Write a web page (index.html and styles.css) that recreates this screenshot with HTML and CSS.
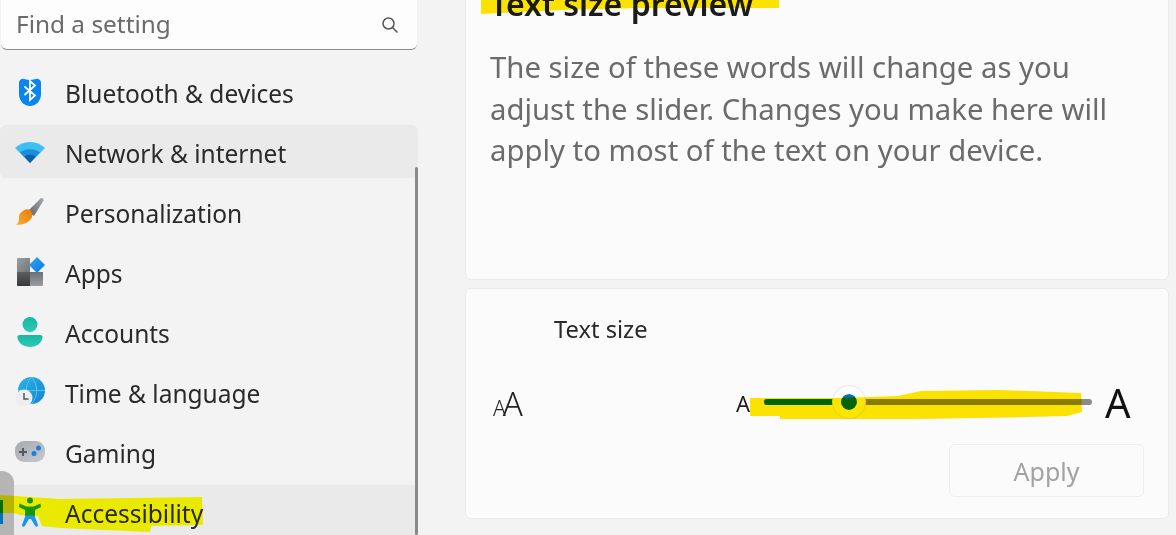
FILE: index.html
```html
<!DOCTYPE html>
<html lang="en">
<head>
	<meta charset="UTF-8">
	<title>Settings</title>
	<link rel="stylesheet" href="styles.css">
</head>
<body>
	<svg class="defs" width="0" height="0">
		<defs>
			<linearGradient id="brush" x1="1" y1="0" x2="0" y2="1">
				<stop offset="0" stop-color="#a4a8ac"/>
				<stop offset="1" stop-color="#5f6469"/>
			</linearGradient>
			<linearGradient id="bristle" x1="1" y1="0" x2="0" y2="1">
				<stop offset="0" stop-color="#e8780f"/>
				<stop offset="1" stop-color="#fbb02e"/>
			</linearGradient>
			<linearGradient id="tile-top" x1="0" y1="0" x2="1" y2="1">
				<stop offset="0" stop-color="#9a9da0"/>
				<stop offset="1" stop-color="#74777a"/>
			</linearGradient>
			<linearGradient id="tile-dark" x1="0" y1="0" x2="0" y2="1">
				<stop offset="0" stop-color="#5c5e60"/>
				<stop offset="1" stop-color="#38393b"/>
			</linearGradient>
			<linearGradient id="tile-right" x1="0" y1="0" x2="0" y2="1">
				<stop offset="0" stop-color="#6e7073"/>
				<stop offset="1" stop-color="#9a9c9f"/>
			</linearGradient>
			<linearGradient id="diamond" x1="0" y1="0" x2="1" y2="1">
				<stop offset="0" stop-color="#2ba6f5"/>
				<stop offset="1" stop-color="#0a78e2"/>
			</linearGradient>
			<linearGradient id="person" x1="0" y1="0" x2="0" y2="1">
				<stop offset="0" stop-color="#16b9a4"/>
				<stop offset="1" stop-color="#2ec9b6"/>
			</linearGradient>
			<linearGradient id="globe" x1="0" y1="0" x2="1" y2="1">
				<stop offset="0" stop-color="#2cb4e4"/>
				<stop offset="1" stop-color="#1484d2"/>
			</linearGradient>
			<linearGradient id="pad" x1="0" y1="0" x2="1" y2="1">
				<stop offset="0" stop-color="#a6aaaf"/>
				<stop offset="1" stop-color="#c6c9cd"/>
			</linearGradient>
		</defs>
	</svg>

	<aside class="sidebar">
		<div class="search">
			<span>Find a setting</span>
			<svg class="search-icon" viewBox="0 0 18 18"><circle cx="7.5" cy="7.5" r="5.5"/><path d="M11.5 11.5 16.5 16.500"/></svg>
		</div>
		<ul class="nav">
			<li>
				<svg class="nav-icon" viewBox="0 0 30 30">
					<path fill="#0a84f0" d="M7 2C9 1 11 3 15 3S21 1 23 2C25 2.500 26 4 26 6V17C26 24 21 29 15 29S4 24 4 17V6C4 4 5 2.500 7 2z"/>
					<path fill="none" stroke="#fff" stroke-width="1.800" d="M9.500 9.500 20 18.500 15 23V4l5 4.500L9.500 18"/>
				</svg>
				<span>Bluetooth &amp; devices</span>
			</li>
			<li class="hover">
				<svg class="nav-icon" viewBox="0 0 30 30">
					<path fill="#3cc0f2" d="M0 11C8 3 22 3 30 11L15 26z"/>
					<path fill="#1c8ed8" d="M5 15.500C10 11 20 11 25 15.500L15 26z"/>
					<path fill="#0f5fa8" d="M9.500 19.500C12.500 17 17.500 17 20.500 19.500L15 26z"/>
				</svg>
				<span>Network &amp; internet</span>
			</li>
			<li>
				<svg class="nav-icon" viewBox="0 0 30 30">
					<path fill="url(#brush)" d="M26 1c1.500-.5 3 1 2.500 2.500L19 19l-6-5z"/>
					<path fill="url(#bristle)" d="M8 14c2-2 5-2 7-1 2 2 3 5 2 7-2 5-8 8-16 8 3-2 3-6 3-8 0-3 2-5 4-6z"/>
				</svg>
				<span>Personalization</span>
			</li>
			<li>
				<svg class="nav-icon" viewBox="0 0 30 30">
					<path fill="url(#tile-top)" d="M3 1h12v14H2V2c0-.5.500-1 1-1z"/>
					<path fill="url(#tile-dark)" d="M2 15h13v14H3c-.5 0-1-.5-1-1z"/>
					<path fill="url(#tile-right)" d="M15 15h13v13c0 .5-.5 1-1 1H15z"/>
					<path fill="url(#diamond)" d="M22 0 30 8 22 16 14 8z"/>
				</svg>
				<span>Apps</span>
			</li>
			<li>
				<svg class="nav-icon" viewBox="0 0 30 30">
					<circle cx="15" cy="7.500" r="7.500" fill="url(#person)"/>
					<path fill="url(#person)" d="M5 18h20c2 0 3 1 2.500 3-1 5-6 9-12.500 9S3.500 26 2.500 21C2 19 3 18 5 18z"/>
				</svg>
				<span>Accounts</span>
			</li>
			<li>
				<svg class="nav-icon" viewBox="0 0 30 30">
					<circle cx="16.500" cy="13.500" r="13.500" fill="url(#globe)"/>
					<path fill="none" stroke="#5cc2ec" d="M3 13.500h27M16.500 0c-7 8-7 19 0 27M16.500 0c7 8 7 19 0 27"/>
					<circle cx="9" cy="21" r="8.500" fill="#eceef0"/>
					<path fill="none" stroke="#55585c" stroke-width="1.500" d="M9 16v6h4.500"/>
				</svg>
				<span>Time &amp; language</span>
			</li>
			<li>
				<svg class="nav-icon" viewBox="0 0 30 30">
					<rect y="4" width="30" height="21" rx="9" fill="url(#pad)"/>
					<path fill="none" stroke="#55585c" stroke-width="2" d="M4 15h8M8 11v8"/>
					<circle cx="23.500" cy="11" r="2.500" fill="#1a80e0"/>
					<circle cx="19" cy="16.500" r="2.500" fill="#1a80e0"/>
				</svg>
				<span>Gaming</span>
			</li>
			<li class="hover">
				<svg class="nav-icon" viewBox="0 0 30 30">
					<circle cx="15" cy="3.500" r="3" fill="#1a96e8"/>
					<path fill="#1a96e8" d="M4.500 6.500 11.500 9.500h7l7-3L26 10l-6 3v7l3 8c.4 1.500-1.800 2.300-2.800 1L16 22h-2l-4.200 7c-1 1.300-3.200.5-2.800-1l3-8v-7l-6-3z"/>
				</svg>
				<span>Accessibility</span>
			</li>
		</ul>
		<div class="peek"></div>
		<div class="selected-bar"></div>
		<div class="scrollbar"></div>
	</aside>

	<main class="content">
		<section class="card preview">
			<h2>Text size preview</h2>
			<p>The size of these words will change as you adjust the slider. Changes you make here will apply to most of the text on your device.</p>
		</section>
		<section class="card size">
			<div class="size-label">Text size</div>
			<div class="size-row">
				<span class="size-icon"><span class="small">A</span><span class="big">A</span></span>
				<span class="a-small">A</span>
				<div class="slider">
					<div class="track"></div>
					<div class="fill"></div>
					<div class="thumb"></div>
				</div>
				<span class="a-big">A</span>
			</div>
			<div class="size-actions">
				<button class="apply">Apply</button>
			</div>
		</section>
	</main>

	<!-- marker strokes drawn over the screenshot -->
	<svg class="marker" viewBox="0 0 1176 535">
		<path fill="#ffe600" d="M481-5H779V8L640 8 560 10 481 14z"/>
		<path fill="#ffe600" d="M750 398 834 398 870 397 898 396 921 391 1000 390 1081 393 1082 412 1067 416 1026 417 917 419 780 419 780 416 750 416z"/>
		<path fill="#ffff00" d="M0 495 60 499 202 497 203 525 151 526 150 532 60 528 42 526 38 516 20 515 14 513 0 513z"/>
	</svg>
</body>
</html>
```

FILE: styles.css
```css
html, body {
	height: 100%;
}
body {
	margin: 0;
	display: flex;
	overflow: hidden;
	background: #f3f3f3;
	color: #1f1f1f;
	font-family: "Noto Sans", sans-serif;
}
.defs {
	position: absolute;
}

/* sidebar */
.sidebar {
	position: relative;
	width: 418px;
	flex: none;
}
.search {
	display: flex;
	align-items: center;
	justify-content: space-between;
	height: 50px;
	margin: 0 1px 15px;
	padding: 0 18px 0 15px;
	box-sizing: border-box;
	background: #fdfdfd;
	border-bottom: 1px solid #8a8a8a;
	border-radius: 0 0 6px 6px;
	font-size: 24.4px;
	color: #6a6a6a;
}
.search span {
	margin-top: -2px;
}
.search-icon {
	width: 18px;
	height: 18px;
	fill: none;
	stroke: #555;
	stroke-width: 1.5;
}
.nav {
	list-style: none;
	margin: 0;
	padding: 0;
	display: flex;
	flex-direction: column;
	gap: 7px;
}
.nav li {
	display: flex;
	align-items: center;
	gap: 20px;
	height: 53px;
	padding-left: 15px;
	border-radius: 6px;
	font-size: 24.5px;
	color: #2a2a2a;
}
.nav li span {
	padding-top: 3px;
}
.nav li.hover {
	background: #eaeaea;
}
.nav-icon {
	width: 30px;
	height: 30px;
	flex: none;
}
.peek {
	position: absolute;
	left: 0;
	top: 471px;
	width: 14px;
	height: 64px;
	background: #b5b5b5;
	border-radius: 0 12px 0 0;
}
.selected-bar {
	position: absolute;
	left: 0;
	top: 500px;
	width: 3px;
	height: 24px;
	background: #0070c0;
}
.scrollbar {
	position: absolute;
	right: 0;
	top: 167px;
	bottom: 0;
	width: 3px;
	background: #8a8a8a;
	border-radius: 2px;
}

/* main column */
.content {
	flex: 1;
	display: flex;
	flex-direction: column;
	gap: 8px;
	margin: -20px 7px 0 47px;
}
.card {
	background: #fbfbfb;
	border: 1px solid #ebebeb;
	border-radius: 6px;
	box-sizing: border-box;
}
.preview {
	height: 300px;
	padding: 0 50px 0 24px;
}
.preview h2 {
	margin: 0;
	font-size: 32px;
	font-weight: 600;
	line-height: 46px;
	color: #1b1b1b;
}
.preview p {
	margin: 20px 0 0;
	font-size: 29.3px;
	line-height: 41.5px;
	color: #6b6b6b;
}
.size {
	height: 231px;
	padding: 22px 24px 20px 27px;
	display: flex;
	flex-direction: column;
}
.size-label {
	padding-left: 61px;
	font-size: 23.7px;
	line-height: 36px;
	color: #2a2a2a;
}
.size-row {
	display: flex;
	align-items: center;
	height: 44px;
	margin-top: 34px;
}
.size-icon {
	width: 243px;
	display: flex;
	align-items: baseline;
	font-weight: 300;
	color: #222;
}
.size-icon .small {
	font-size: 21px;
}
.size-icon .big {
	font-size: 33px;
	margin-left: -3px;
}
.a-small {
	width: 28px;
	font-size: 22px;
}
.slider {
	position: relative;
	width: 328px;
	height: 32px;
}
.track, .fill {
	position: absolute;
	top: 12px;
	left: 0;
	height: 6px;
	border-radius: 3px;
}
.track {
	right: 0;
	background: #8a8a8a;
}
.fill {
	width: 85px;
	background: #0070c0;
}
.thumb {
	position: absolute;
	left: 69px;
	top: -1px;
	width: 16px;
	height: 16px;
	padding: 8px;
	background: #0070c0;
	background-clip: content-box;
	border-radius: 50%;
	box-shadow: inset 0 0 0 8px #fff, 0 0 0 1px #e8e8e8;
}
.a-big {
	margin-left: 13px;
	font-size: 40px;
	line-height: 44px;
	color: #111;
}
.size-actions {
	display: flex;
	justify-content: flex-end;
	margin-top: 19px;
}
.apply {
	width: 195px;
	height: 53px;
	background: #fbfbfb;
	border: 1px solid #eee;
	border-radius: 6px;
	font-family: inherit;
	font-size: 25px;
	color: #a2a2a2;
}

/* highlighter layer */
.marker {
	position: absolute;
	left: 0;
	top: 0;
	width: 1176px;
	height: 535px;
	mix-blend-mode: multiply;
	pointer-events: none;
}
```
